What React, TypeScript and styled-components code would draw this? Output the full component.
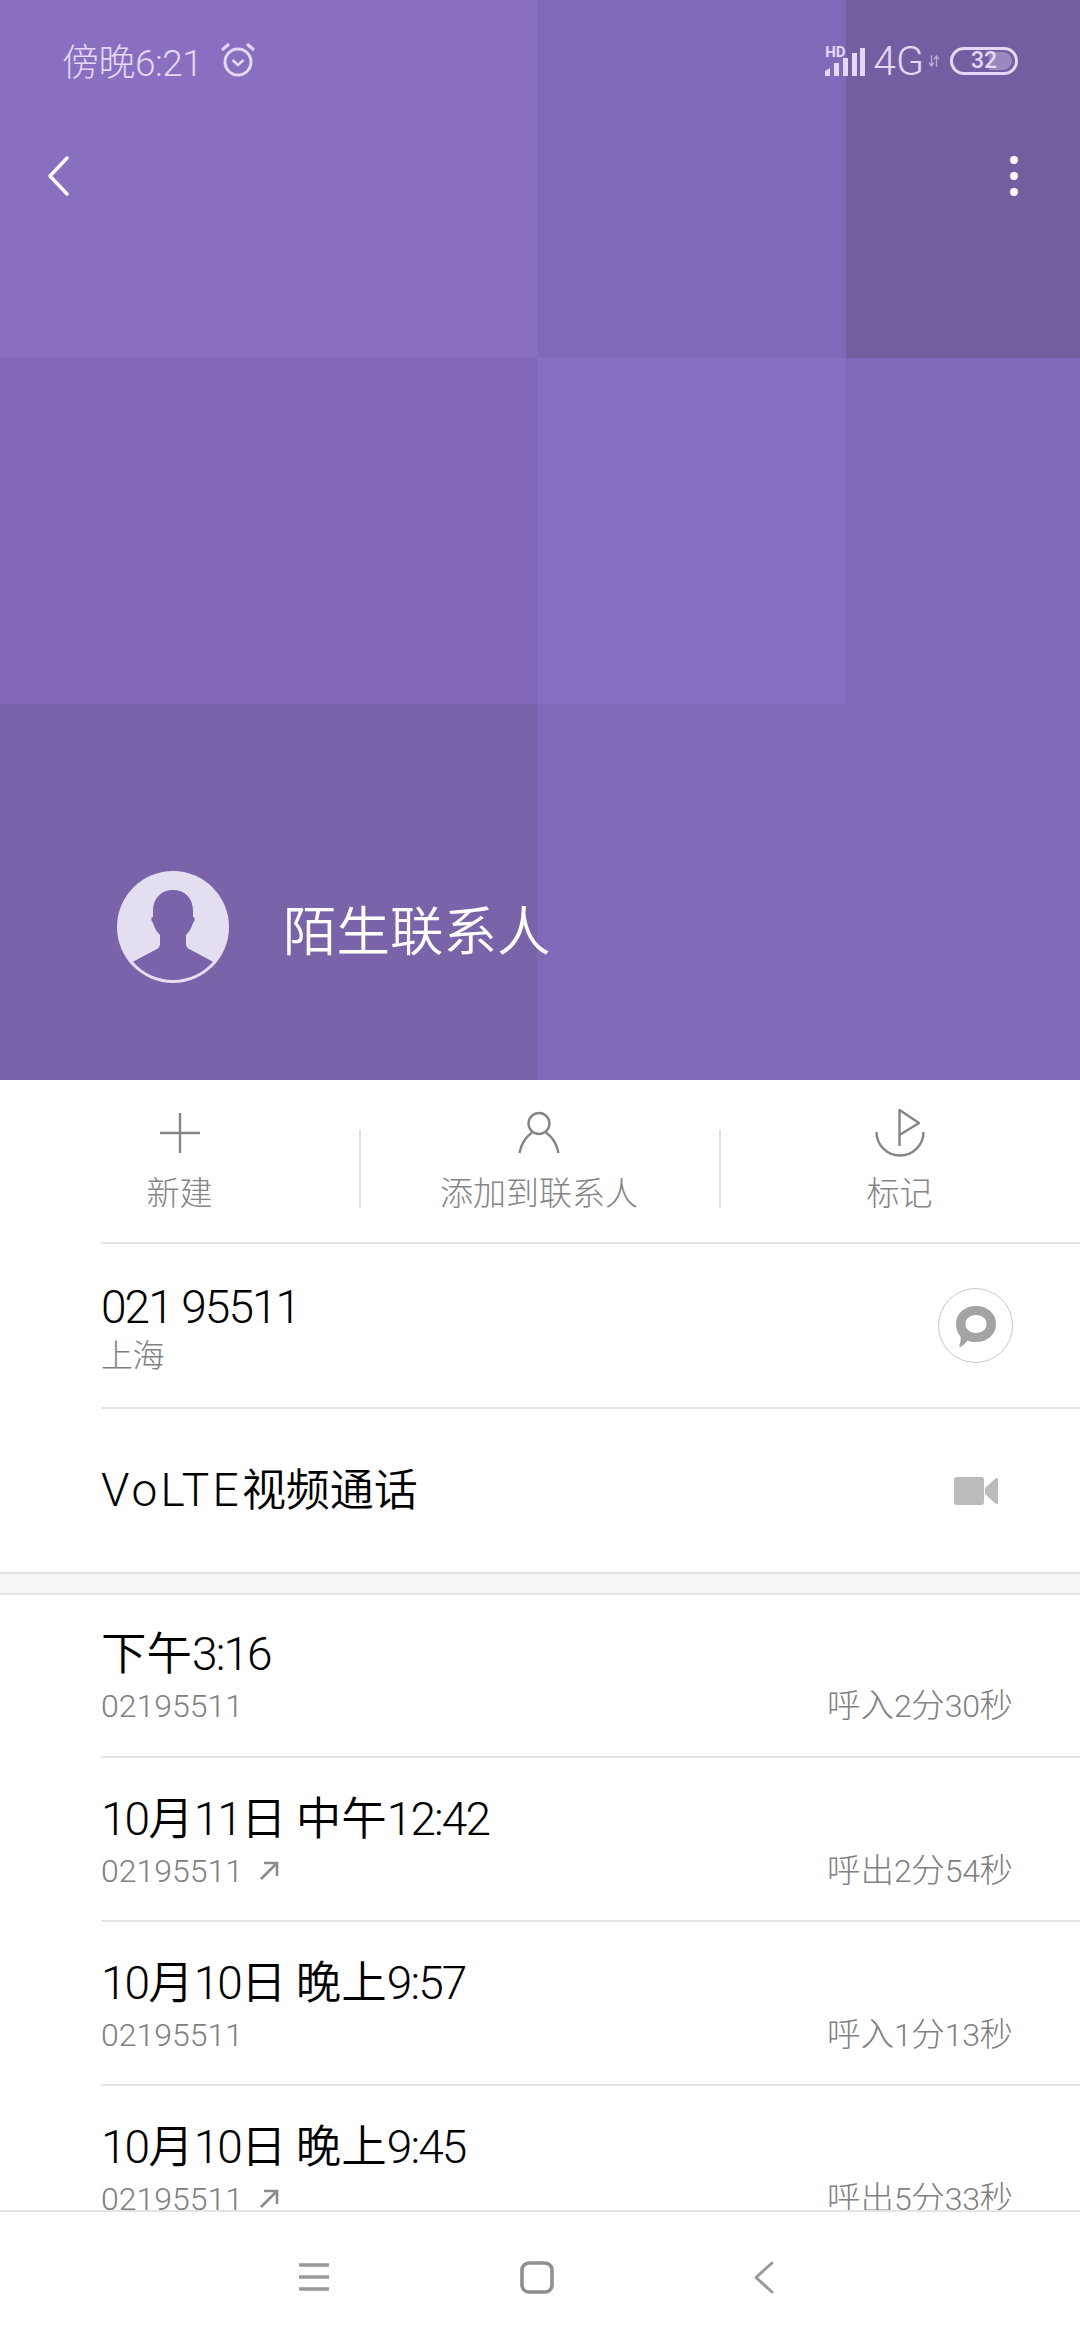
import styled, { createGlobalStyle } from "styled-components";

const GlobalStyle = createGlobalStyle`
  html, body {
    margin: 0;
    padding: 0;
    background: #fff;
  }
`;

const FONT = `Roboto, "Noto Sans CJK SC", sans-serif`;

const tiles = [
  { color: "#886fbf", span: 1 },
  { color: "#8169ba", span: 1 },
  { color: "#735ea2", span: 1 },
  { color: "#8167b9", span: 1 },
  { color: "#876fc3", span: 1 },
  { color: "#8169b9", span: 1 },
  { color: "#7a64a9", span: 1 },
  { color: "#8169b9", span: 2 },
];

const calls = [
  { time: "下午3:16", out: false, duration: "呼入2分30秒" },
  { time: "10月11日 中午12:42", out: true, duration: "呼出2分54秒" },
  { time: "10月10日 晚上9:57", out: false, duration: "呼入1分13秒" },
  { time: "10月10日 晚上9:45", out: true, duration: "呼出5分33秒" },
];

const Hanzi = styled.span`
  letter-spacing: 0;
`;

// the reference font has narrow digits, so hanzi runs get their own size and spacing
const Mixed = ({ text }: { text: string }) => (
  <>
    {text.split(/([\u4e00-\u9fff]+)/).map((part, i) =>
      i % 2 ? <Hanzi key={i}>{part}</Hanzi> : part
    )}
  </>
);

const App = () => {
  return (
    <Page>
      <GlobalStyle />
      <Hero>
        <TileGrid>
          {tiles.map((tile, i) => (
            <Tile key={i} $color={tile.color} $span={tile.span} />
          ))}
        </TileGrid>
        <StatusBar>
          <StatusLeft>
            <span>傍晚6:21</span>
            <AlarmIcon />
          </StatusLeft>
          <StatusRight>
            <Signal>
              <HdBadge>HD</HdBadge>
              <SignalIcon />
            </Signal>
            <NetLabel>4G</NetLabel>
            <ArrowsIcon />
            <Battery>
              <BatteryFill />
              <BatteryText>32</BatteryText>
            </Battery>
          </StatusRight>
        </StatusBar>
        <Toolbar>
          <svg width="24" height="40" viewBox="0 0 24 40">
            <path d="M20 2 L3 20 L20 38" fill="none" stroke="#fff" strokeWidth="3.4" strokeLinecap="round" strokeLinejoin="round" />
          </svg>
          <svg width="10" height="40" viewBox="0 0 10 40">
            <circle cx="5" cy="4" r="4" fill="#fff" />
            <circle cx="5" cy="20" r="4" fill="#fff" />
            <circle cx="5" cy="36" r="4" fill="#fff" />
          </svg>
        </Toolbar>
        <Profile>
          <AvatarIcon />
          <ProfileName>陌生联系人</ProfileName>
        </Profile>
      </Hero>

      <Actions>
        <Action>
          <ActionIcon>
            <svg width="42" height="42" viewBox="0 0 42 42">
              <path d="M21 1 V41 M1 21 H41" stroke="#858585" strokeWidth="2.4" fill="none" />
            </svg>
          </ActionIcon>
          <ActionLabel>新建</ActionLabel>
        </Action>
        <Action $divider>
          <ActionIcon>
            <svg width="44" height="44" viewBox="0 0 44 44">
              <circle cx="22" cy="12.5" r="10.5" stroke="#858585" strokeWidth="2.4" fill="none" />
              <path d="M2.5 42 C4 33 9 26 15 21.5 M41.5 42 C40 33 35 26 29 21.5" stroke="#858585" strokeWidth="2.4" fill="none" />
            </svg>
          </ActionIcon>
          <ActionLabel>添加到联系人</ActionLabel>
        </Action>
        <Action $divider>
          <ActionIcon>
            <svg width="50" height="50" viewBox="0 0 50 50">
              <path d="M1.5 24 A23.5 23.5 0 0 0 48.5 24" stroke="#858585" strokeWidth="2.4" fill="none" />
              <path d="M24.5 38 V2 L44 15 L24.5 27" stroke="#858585" strokeWidth="2.4" fill="none" strokeLinejoin="round" />
            </svg>
          </ActionIcon>
          <ActionLabel>标记</ActionLabel>
        </Action>
      </Actions>

      <InfoRow>
        <InfoText>
          <Title>021 95511</Title>
          <SubText>上海</SubText>
        </InfoText>
        <MessageButton>
          <svg width="42" height="42" viewBox="0 0 42 42">
            <path
              fillRule="evenodd"
              fill="#a4a4a4"
              d="M21 1 C32.5 1 41 8.5 41 19 C41 29.5 32.5 37 21 37 C18 37 15 36.5 12.5 35.5 C10.5 38.5 7.5 41 5.5 42 C4 42 4 41 4.5 40 C5.5 37.5 6 34.5 5.5 31.5 C2.5 28 1 24 1 19 C1 8.5 9.5 1 21 1 Z M21 10 C15 10 10.5 13.5 10.5 19 C10.5 24.5 15 28 21 28 C27 28 31.5 24.5 31.5 19 C31.5 13.5 27 10 21 10 Z"
            />
          </svg>
        </MessageButton>
      </InfoRow>
      <InfoRow>
        <VideoLabel>
          <Mixed text="VoLTE视频通话" />
        </VideoLabel>
        <VideoSlot>
          <svg width="44" height="30" viewBox="0 0 44 30">
            <rect x="0" y="1" width="30" height="28" rx="3" fill="#bbb" />
            <path d="M31 12 L41.5 2.5 C43 1.5 44 2.5 44 3.5 V26.5 C44 27.5 43 28.5 41.5 27.5 L31 18 Z" fill="#bbb" />
          </svg>
        </VideoSlot>
      </InfoRow>
      <SectionGap />

      <CallList>
        {calls.map((call) => (
          <CallRow key={call.time + call.duration}>
            <Title>
              <Mixed text={call.time} />
            </Title>
            <CallMeta>
              <CallNumber>
                02195511
                {call.out && (
                  <svg width="20" height="20" viewBox="0 0 20 20">
                    <path d="M2 18 L18 2 M5 2 H18 V15" stroke="#8a8a8a" strokeWidth="2.6" fill="none" />
                  </svg>
                )}
              </CallNumber>
              <SubText>
                <Mixed text={call.duration} />
              </SubText>
            </CallMeta>
          </CallRow>
        ))}
      </CallList>

      <NavBar>
        <svg width="30" height="28" viewBox="0 0 30 28">
          <path d="M0 2 H30 M0 14 H30 M0 26 H30" stroke="#999" strokeWidth="3.4" />
        </svg>
        <svg width="34" height="33" viewBox="0 0 34 33">
          <rect x="2" y="2" width="30" height="29" rx="7" stroke="#8f8f8f" strokeWidth="3.6" fill="none" />
        </svg>
        <svg width="20" height="33" viewBox="0 0 20 33">
          <path d="M18 2 L2 16.5 L18 31" stroke="#999" strokeWidth="3" fill="none" strokeLinecap="round" strokeLinejoin="round" />
        </svg>
      </NavBar>
    </Page>
  );
};

const AlarmIcon = () => (
  <svg width="36" height="36" viewBox="0 0 36 36">
    <circle cx="18" cy="20" r="13" stroke="#e3d8f5" strokeWidth="3" fill="none" />
    <path d="M12.5 18 L18 23 L23.5 18" stroke="#e3d8f5" strokeWidth="2.6" fill="none" />
    <path d="M2 8 L9 2 M34 8 L27 2" stroke="#e3d8f5" strokeWidth="3" fill="none" />
  </svg>
);

const SignalIcon = () => (
  <svg width="40" height="28" viewBox="0 0 40 28">
    <path d="M0 28 V23 L5 20 V28 Z" fill="#e3d8f5" />
    <rect x="9" y="15" width="5" height="13" fill="#e3d8f5" />
    <rect x="18" y="10" width="5" height="18" fill="#e3d8f5" />
    <rect x="27" y="5" width="5" height="23" fill="#e3d8f5" />
    <rect x="35" y="0" width="5" height="28" fill="#e3d8f5" />
  </svg>
);

const ArrowsIcon = () => (
  <svg width="10" height="12" viewBox="0 0 12 14">
    <path d="M3 0 V13 M0 9 L3 13 L6 9 M9 14 V1 M6 5 L9 1 L12 5" stroke="#b9aad8" strokeWidth="1.6" fill="none" />
  </svg>
);

const AvatarIcon = () => (
  <svg width="112" height="112" viewBox="0 0 112 112">
    <circle cx="56" cy="56" r="56" fill="#e4dff0" />
    <path
      fill="#7a64a9"
      d="M56 19 C44 19 36 27 36 40 L36 46 C33.5 46 34 50 36 52 C38 58 40 61 43 64 L43 73 C43 76 41 78 38 79 L16 90.8 A53 53 0 0 0 96 90.8 L74 79 C71 78 69 76 69 73 L69 64 C72 61 74 58 76 52 C78 50 78.5 46 76 46 L76 40 C76 27 68 19 56 19 Z"
    />
  </svg>
);

const Page = styled.div`
  width: 1080px;
  height: 2340px;
  display: flex;
  flex-direction: column;
  overflow: hidden;
  background: #fff;
  font-family: ${FONT};
`;

const Hero = styled.header`
  position: relative;
  height: 1080px;
  flex: none;
  display: flex;
  flex-direction: column;
`;

const TileGrid = styled.div`
  position: absolute;
  inset: 0;
  display: grid;
  grid-template-columns: 537px 309px 234px;
  grid-template-rows: 358px 346px 376px;
`;

const Tile = styled.div<{ $color: string; $span: number }>`
  background: ${(p) => p.$color};
  grid-column: span ${(p) => p.$span};
`;

const StatusBar = styled.div`
  position: relative;
  display: flex;
  justify-content: space-between;
  align-items: center;
  height: 46px;
  margin-top: 37px;
  padding: 0 62px;
  color: #e3d8f5;
  font-size: 37px;
  font-weight: 300;
`;

const StatusLeft = styled.div`
  display: flex;
  align-items: center;
  gap: 18px;
  letter-spacing: -0.5px;
`;

const StatusRight = styled.div`
  display: flex;
  align-items: center;
  gap: 5px;
  margin-top: 2px;
`;

const Signal = styled.div`
  position: relative;
  display: flex;
  align-items: flex-end;
  height: 30px;
`;

const HdBadge = styled.span`
  position: absolute;
  left: 0;
  top: -1px;
  font-size: 15px;
  font-weight: 700;
  line-height: 14px;
`;

const NetLabel = styled.span`
  font-size: 41px;
  line-height: 40px;
  margin-left: 3px;
`;

const Battery = styled.div`
  position: relative;
  width: 68px;
  height: 28px;
  box-sizing: border-box;
  border: 3px solid #e3d8f5;
  border-radius: 14px;
  margin-left: 6px;
  overflow: hidden;
  display: flex;
  align-items: center;
  justify-content: center;
`;

const BatteryFill = styled.div`
  position: absolute;
  top: 2px;
  bottom: 2px;
  left: 36px;
  right: 3px;
  border-radius: 0 9px 9px 0;
  background: rgba(227, 216, 245, 0.35);
`;

const BatteryText = styled.span`
  position: relative;
  font-size: 23px;
  font-weight: 500;
  line-height: 22px;
`;

const Toolbar = styled.div`
  position: relative;
  display: flex;
  justify-content: space-between;
  align-items: center;
  margin-top: 73px;
  padding: 0 61px 0 47px;
`;

const Profile = styled.div`
  position: relative;
  margin-top: auto;
  display: flex;
  align-items: center;
  gap: 54px;
  padding: 0 0 97px 117px;
`;

const ProfileName = styled.span`
  color: #fff;
  font-size: 53.5px;
  font-weight: 350;
`;

const Actions = styled.div`
  flex: none;
  display: grid;
  grid-template-columns: 359px 360px 361px;
  height: 162px;
  box-sizing: border-box;
  padding-top: 28px;
`;

const Action = styled.div<{ $divider?: boolean }>`
  position: relative;
  display: flex;
  flex-direction: column;
  align-items: center;
  ${(p) =>
    p.$divider &&
    `
    &::before {
      content: "";
      position: absolute;
      left: 0;
      top: 22px;
      bottom: 34px;
      width: 1.5px;
      background: #dcdcdc;
    }
  `}
`;

const ActionIcon = styled.div`
  height: 50px;
  display: flex;
  align-items: center;
  justify-content: center;
`;

const ActionLabel = styled.span`
  margin-top: 17px;
  font-size: 33px;
  font-weight: 300;
  line-height: 38px;
  color: #858585;
`;

const InfoRow = styled.div`
  flex: none;
  height: 165px;
  box-sizing: border-box;
  margin-left: 101px;
  padding-right: 67px;
  border-top: 2px solid #e4e4e4;
  display: flex;
  align-items: center;
  justify-content: space-between;
`;

const InfoText = styled.div`
  display: flex;
  flex-direction: column;
  padding-top: 4px;
`;

const Title = styled.div`
  font-size: 46px;
  font-weight: 300;
  line-height: 56px;
  letter-spacing: -1.9px;
  color: #000;
  ${Hanzi} {
    font-size: 45.5px;
    font-weight: 350;
  }
`;

const VideoLabel = styled(Title)`
  letter-spacing: 3.2px;
  ${Hanzi} {
    font-size: 44px;
  }
`;

const SubText = styled.span`
  font-size: 32px;
  font-weight: 300;
  line-height: 42px;
  letter-spacing: -0.4px;
  color: #808080;
  ${Hanzi} {
    font-size: 33.5px;
  }
`;

const MessageButton = styled.div`
  width: 75px;
  height: 75px;
  box-sizing: border-box;
  border: 1.5px solid #c8c8c8;
  border-radius: 50%;
  display: flex;
  align-items: center;
  justify-content: center;
`;

const VideoSlot = styled.div`
  width: 75px;
  display: flex;
  justify-content: center;
`;

const SectionGap = styled.div`
  flex: none;
  height: 23px;
  box-sizing: border-box;
  background: #f7f7f7;
  border-top: 2px solid #e4e4e4;
  border-bottom: 2px solid #e4e4e4;
`;

const CallList = styled.div`
  flex: 1;
  min-height: 0;
  overflow: hidden;
`;

const CallRow = styled.div`
  height: 164px;
  box-sizing: border-box;
  margin-left: 101px;
  padding: 33px 67px 0 0;
  &:first-child {
    height: 161px;
    padding-top: 31px;
  }
  &:not(:first-child) {
    border-top: 2px solid #e4e4e4;
  }
`;

const CallMeta = styled.div`
  display: flex;
  justify-content: space-between;
  align-items: center;
  margin-top: 2px;
`;

const CallNumber = styled.span`
  display: flex;
  align-items: center;
  gap: 16px;
  font-size: 32px;
  font-weight: 300;
  line-height: 42px;
  color: #808080;
`;

const NavBar = styled.nav`
  flex: none;
  height: 130px;
  box-sizing: border-box;
  border-top: 2px solid #e4e4e4;
  background: #fff;
  display: grid;
  grid-template-columns: 223px 223px 231px;
  justify-content: center;
  justify-items: center;
  align-items: center;
  padding: 2px 0 0 2px;
`;

export default App;
